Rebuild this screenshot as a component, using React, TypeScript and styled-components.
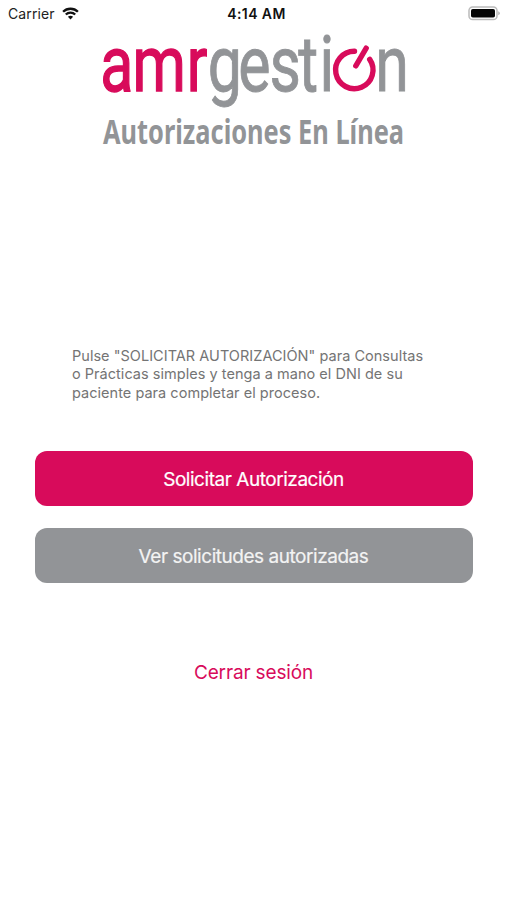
import React from "react";
import styled, { createGlobalStyle } from "styled-components";

const pink = "#d80b5b";
const grey = "#929497";

const GlobalStyle = createGlobalStyle`
  * { box-sizing: border-box; }
  body { margin: 0; background: #fff; font-family: Inter, "Liberation Sans", sans-serif; }
`;

const Screen = styled.div`
  display: flex;
  flex-direction: column;
  align-items: center;
  width: 507px;
  height: 900px;
  background: #fff;
  overflow: hidden;
`;

const StatusBar = styled.header`
  display: grid;
  grid-template-columns: 1fr auto 1fr;
  align-items: center;
  width: 100%;
  height: 26px;
  padding: 0 7px 0 8px;
  color: #222;
`;

const Carrier = styled.div`
  display: flex;
  align-items: center;
  gap: 7px;
  font-size: 14px;
  letter-spacing: 0.12px;
`;

const Clock = styled.time`
  margin-left: 5px;
  font-size: 14px;
  font-weight: 600;
  letter-spacing: 0.4px;
  color: #111;
`;

const Battery = styled.svg`
  justify-self: end;
  display: block;
`;

const Logo = styled.svg`
  display: block;
  width: 507px;
  height: 128px;
  overflow: visible;
`;

const Wordmark = styled.text<{ $tone: string; $stroke: number }>`
  font-family: Roboto, sans-serif;
  font-size: 78px;
  fill: ${(p) => p.$tone};
  stroke: ${(p) => p.$tone};
  stroke-width: ${(p) => p.$stroke}px;
`;

const Tagline = styled.text`
  font-family: "Noto Sans", sans-serif;
  font-size: 34px;
  font-weight: 700;
  fill: ${grey};
`;

const Instructions = styled.p`
  width: 364px;
  margin: 193px 0 0 1px;
  font-size: 14.5px;
  line-height: 18.3px;
  letter-spacing: 0.03px;
  color: #747474;
  white-space: nowrap;
`;

const Actions = styled.div`
  display: flex;
  flex-direction: column;
  gap: 22px;
  width: 438px;
  margin-top: 49px;
`;

const ActionButton = styled.button<{ $tone: string; $text: string }>`
  height: 55px;
  padding: 2px 0 0;
  border: 0;
  border-radius: 12px;
  background: ${(p) => p.$tone};
  color: ${(p) => p.$text};
  font: 400 19px Inter, sans-serif;
  letter-spacing: -0.46px;
  -webkit-text-stroke: 0.2px currentColor;
`;

const LogoutButton = styled.button`
  margin-top: 76px;
  padding: 0;
  border: 0;
  background: none;
  color: ${pink};
  font: 400 19px/28px Inter, sans-serif;
  letter-spacing: -0.15px;
`;

const App = () => (
  <Screen>
    <GlobalStyle />
    <StatusBar>
      <Carrier>
        <span>Carrier</span>
        <svg width="17" height="13" viewBox="0 0 17 13" fill="none" stroke="#111" strokeWidth="2.3">
          <path d="M1.1 4.8C5.1 .7 11.9 .7 15.9 4.8M3.8 7.5C6.4 4.9 10.6 4.9 13.2 7.5" />
          <path d="M8.5 12.4 5.9 9.8C7.3 8.4 9.7 8.4 11.1 9.8Z" fill="#111" stroke="none" />
        </svg>
      </Carrier>
      <Clock>4:14 AM</Clock>
      <Battery width="32" height="15" viewBox="0 0 32 15">
        <rect x="1" y="1" width="28" height="12.5" rx="3.6" fill="#fff" stroke="#bbb" strokeWidth="1.5" />
        <rect x="3" y="3" width="24" height="8.5" rx="1.8" fill="#050505" />
        <path d="M30.3 5.2q1.4.5 1.4 2t-1.4 2Z" fill="#aaa" />
      </Battery>
    </StatusBar>
    <Logo viewBox="0 26 507 128" role="img" aria-label="amrgestión Autorizaciones En Línea">
      <Wordmark $tone={pink} $stroke={1.4} transform="translate(0 91.1) scale(.78 1)" x="128.5 170 239.5">amr</Wordmark>
      <Wordmark $tone={grey} $stroke={0.9} transform="translate(0 91.3) scale(.78 1)" x="266.5 305.5 345.5 382.5 409.5">gesti</Wordmark>
      <g fill="none" stroke={pink} strokeWidth="5.4" strokeLinecap="round">
        <path d="M354.5 51.3A18.7 18.7 0 1 0 369.7 59.4" />
        <path d="M366.2 48.2 355.8 65.8" />
      </g>
      <Wordmark $tone={grey} $stroke={0.9} transform="translate(0 91.3) scale(.78 1)" x="481">n</Wordmark>
      <Tagline x="103" y="143.5" textLength="301" lengthAdjust="spacingAndGlyphs">Autorizaciones En Línea</Tagline>
    </Logo>
    <Instructions>
      Pulse "SOLICITAR AUTORIZACIÓN" para Consultas<br />
      o Prácticas simples y tenga a mano el DNI de su<br />
      paciente para completar el proceso.
    </Instructions>
    <Actions>
      <ActionButton $tone={pink} $text="#fff">Solicitar Autorización</ActionButton>
      <ActionButton $tone={grey} $text="#f3f3f3">Ver solicitudes autorizadas</ActionButton>
    </Actions>
    <LogoutButton>Cerrar sesión</LogoutButton>
  </Screen>
);

export default App;
